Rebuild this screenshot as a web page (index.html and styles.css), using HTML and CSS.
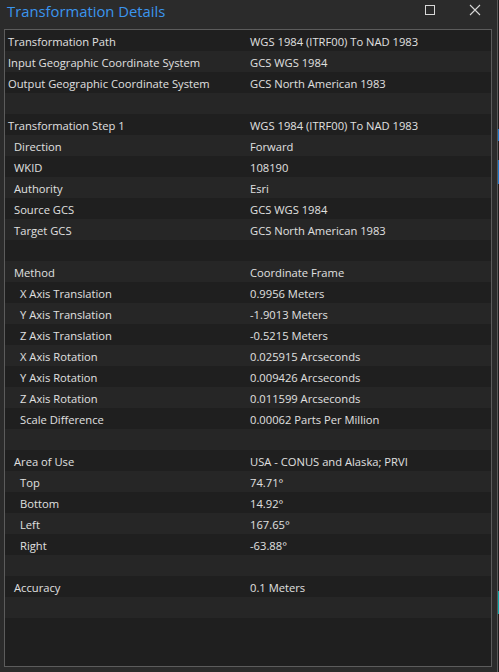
FILE: index.html
```html
<!DOCTYPE html>
<html>
<head>
<meta charset="utf-8">
<link rel="stylesheet" href="styles.css">
</head>
<body>
<div class="screen">
  <div class="window">
    <div class="titlebar">
      <div class="title">Transformation Details</div>
      <div class="controls">
        <svg class="ctl" width="12" height="12" viewBox="0 0 12 12"><rect x="1.5" y="1.5" width="9" height="9" fill="none" stroke="#d8d8d8" stroke-width="1"/></svg>
        <svg class="ctl close" width="12" height="12" viewBox="0 0 12 12"><path d="M1 1 L11 11 M11 1 L1 11" stroke="#d8d8d8" stroke-width="1.1"/></svg>
      </div>
    </div>
    <div class="body">
      <div class="panel">
        <div class="row"><span class="k l0">Transformation Path</span><span class="v">WGS 1984 (ITRF00) To NAD 1983</span></div>
        <div class="row"><span class="k l0">Input Geographic Coordinate System</span><span class="v">GCS WGS 1984</span></div>
        <div class="row"><span class="k l0">Output Geographic Coordinate System</span><span class="v">GCS North American 1983</span></div>
        <div class="row"></div>
        <div class="row"><span class="k l0">Transformation Step 1</span><span class="v">WGS 1984 (ITRF00) To NAD 1983</span></div>
        <div class="row"><span class="k l1">Direction</span><span class="v">Forward</span></div>
        <div class="row"><span class="k l1">WKID</span><span class="v">108190</span></div>
        <div class="row"><span class="k l1">Authority</span><span class="v">Esri</span></div>
        <div class="row"><span class="k l1">Source GCS</span><span class="v">GCS WGS 1984</span></div>
        <div class="row"><span class="k l1">Target GCS</span><span class="v">GCS North American 1983</span></div>
        <div class="row"></div>
        <div class="row"><span class="k l1">Method</span><span class="v">Coordinate Frame</span></div>
        <div class="row"><span class="k l2">X Axis Translation</span><span class="v">0.9956 Meters</span></div>
        <div class="row"><span class="k l2">Y Axis Translation</span><span class="v">-1.9013 Meters</span></div>
        <div class="row"><span class="k l2">Z Axis Translation</span><span class="v">-0.5215 Meters</span></div>
        <div class="row"><span class="k l2">X Axis Rotation</span><span class="v">0.025915 Arcseconds</span></div>
        <div class="row"><span class="k l2">Y Axis Rotation</span><span class="v">0.009426 Arcseconds</span></div>
        <div class="row"><span class="k l2">Z Axis Rotation</span><span class="v">0.011599 Arcseconds</span></div>
        <div class="row"><span class="k l2">Scale Difference</span><span class="v">0.00062 Parts Per Million</span></div>
        <div class="row"></div>
        <div class="row"><span class="k l1">Area of Use</span><span class="v">USA - CONUS and Alaska; PRVI</span></div>
        <div class="row"><span class="k l2">Top</span><span class="v">74.71°</span></div>
        <div class="row"><span class="k l2">Bottom</span><span class="v">14.92°</span></div>
        <div class="row"><span class="k l2">Left</span><span class="v">167.65°</span></div>
        <div class="row"><span class="k l2">Right</span><span class="v">-63.88°</span></div>
        <div class="row"></div>
        <div class="row"><span class="k l1">Accuracy</span><span class="v">0.1 Meters</span></div>
        <div class="row"></div>
      </div>
    </div>
  </div>
  <div class="edge"></div>
  <div class="outside">
    <div class="strip blue s1"></div>
    <div class="strip blue s2"></div>
    <div class="strip teal s3"></div>
  </div>
</div>
</body>
</html>
```
FILE: styles.css
```css
html, body {
  margin: 0;
  padding: 0;
  background: #2b2b2b;
}
body {
  font-family: "Open Sans", "Noto Sans", sans-serif;
  color: #e0e0e0;
}
.screen {
  display: flex;
  width: 499px;
  height: 672px;
  overflow: hidden;
}
.window {
  width: 497px;
  height: 672px;
  background: #2b2b2b;
  display: flex;
  flex-direction: column;
}
.titlebar {
  height: 29px;
  display: flex;
  align-items: flex-start;
  justify-content: space-between;
}
.title {
  color: #3b95ee;
  font-family: "Open Sans", sans-serif;
  font-size: 14.8px;
  margin: 1px 0 0 7px;
}
.controls {
  display: flex;
  gap: 33px;
  margin: 4px 16px 0 0;
}
.ctl { display: block; }
.body {
  padding: 0 5px 0 4px;
}
.panel {
  height: 636px;
  border: 1px solid #5c5c5c;
  background: #1f1f1f;
}
.row {
  height: 21px;
  display: flex;
  align-items: center;
  font-size: 11.2px;
  white-space: nowrap;
}
.row:nth-child(even) {
  background: #262626;
}
.k, .v {
  padding-top: 1px;
}
.k {
  width: 245px;
  flex: none;
  box-sizing: border-box;
}
.l0 { padding-left: 3px; }
.l1 { padding-left: 9px; }
.l2 { padding-left: 15px; }
.v { flex: none; }
.edge {
  width: 1px;
  height: 672px;
  background: #5a5a5a;
}
.outside {
  width: 1px;
  height: 672px;
  background: #1e1e1e;
  display: flex;
  flex-direction: column;
}
.strip { width: 1px; }
.blue { background: #1b74c8; }
.teal { background: #0aa3a3; }
.s1 { height: 12px; margin-top: 129px; }
.s2 { height: 24px; margin-top: 19px; }
.s3 { height: 23px; margin-top: 407px; }
```
